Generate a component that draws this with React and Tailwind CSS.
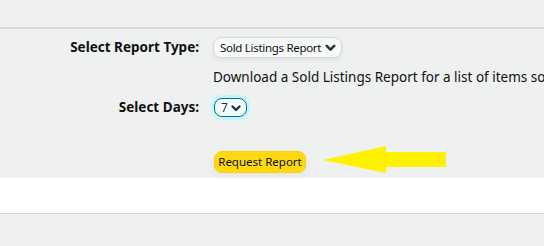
function Chevron({ className = "" }) {
  return (
    <svg viewBox="0 0 12 12" className={className} fill="none" stroke="currentColor" strokeWidth="2.4" strokeLinecap="round" strokeLinejoin="round">
      <path d="M2.5 4.5 L6 8 L9.5 4.5" />
    </svg>
  )
}

function Arrow() {
  return (
    <svg width="124" height="28" viewBox="0 0 124 28" className="shrink-0">
      <polygon points="0,14 63,0 63,6 123,6 123,21 63,21 63,27" fill="#fff200" />
    </svg>
  )
}

export default function App() {
  return (
    <div className="w-[544px] h-[246px] overflow-hidden bg-[#eff0f0] text-[#0f1111]" style={{ fontFamily: '"Noto Sans", "Open Sans", sans-serif' }}>
      <div className="h-[27px]" />
      <div className="h-[2px] bg-[#d7d9d9]" />

      {/* Form */}
      <div className="h-[149px] pt-[8px]">
        <div className="flex items-center h-[21px]">
          <div className="w-[199px] text-right text-[13.5px] font-bold leading-none">Select Report Type:</div>
          <div className="ml-[14px] flex items-center gap-[3px] h-[21px] pl-[6px] pr-[4px] rounded-lg border border-[#d5d9d9] bg-[#f7f8f8] shadow-[0_2px_4px_rgba(213,217,217,0.6)] text-[11.5px] tracking-[-0.3px] whitespace-nowrap">
            <span>Sold Listings Report</span>
            <Chevron className="w-[13px] h-[13px] shrink-0 text-[#333]" />
          </div>
        </div>

        <div className="ml-[213px] mt-[9px] h-[21px] flex items-center whitespace-nowrap text-[13.5px] leading-none">
          Download a Sold Listings Report for a list of items so
        </div>

        <div className="flex items-center h-[21px] mt-[9px]">
          <div className="w-[199px] text-right text-[13.5px] font-bold leading-none">Select Days:</div>
          <div className="ml-[15px] flex items-center h-[19px] w-[33px] pl-[6px] pr-[4px] rounded-lg border border-[#007185] bg-[#f0fbfd] shadow-[0_0_0_3px_#c8f3fa] text-[12px]">
            <span className="flex-1 text-[#333]">7</span>
            <Chevron className="w-[12px] h-[12px] shrink-0 text-[#333]" />
          </div>
        </div>

        <div className="flex items-center mt-[31px] ml-[214px]">
          <div className="h-[22px] w-[92px] flex items-center justify-center rounded-lg bg-[#ffd814] border border-[#fcd200] shadow-[0_2px_5px_rgba(213,217,217,0.5)] text-[11.5px] whitespace-nowrap">
            Request Report
          </div>
          <div className="ml-[17px] mt-[-3px]">
            <Arrow />
          </div>
        </div>
      </div>

      <div className="h-[35px] bg-white" />
      <div className="h-px bg-[#d5d9d9]" />
    </div>
  )
}
